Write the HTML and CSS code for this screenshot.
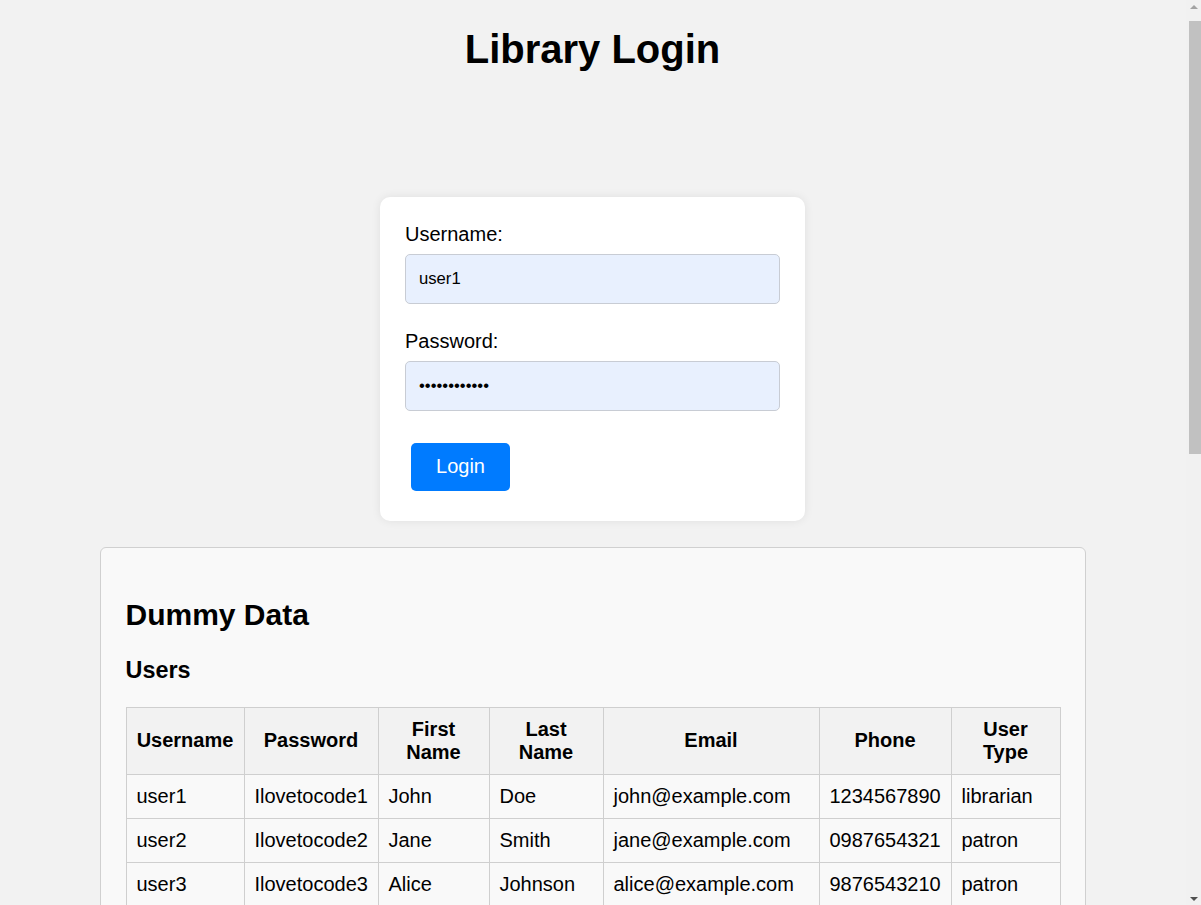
FILE: index.html
```html
<!DOCTYPE html>
<html lang="en">
<head>
<meta charset="utf-8">
<title>Library Login</title>
<link rel="stylesheet" href="styles.css">
</head>
<body>
<div class="page">
  <h1 class="title">Library Login</h1>

  <form class="login-card">
    <label class="field-label" for="username">Username:</label>
    <input class="field-input" id="username" type="text" value="user1">
    <label class="field-label" for="password">Password:</label>
    <input class="field-input" id="password" type="password" value="Ilovetocode1">
    <button class="login-btn" type="button">Login</button>
  </form>

  <section class="dummy">
    <h2 class="dummy-title">Dummy Data</h2>

    <h3 class="dummy-sub">Users</h3>
    <table class="data-table users">
      <colgroup>
        <col class="c-user"><col class="c-pass"><col class="c-first"><col class="c-last"><col class="c-email"><col class="c-phone"><col class="c-type">
      </colgroup>
      <thead>
        <tr><th>Username</th><th>Password</th><th>First Name</th><th>Last Name</th><th>Email</th><th>Phone</th><th>User Type</th></tr>
      </thead>
      <tbody>
        <tr><td>user1</td><td>Ilovetocode1</td><td>John</td><td>Doe</td><td>john@example.com</td><td>1234567890</td><td>librarian</td></tr>
        <tr><td>user2</td><td>Ilovetocode2</td><td>Jane</td><td>Smith</td><td>jane@example.com</td><td>0987654321</td><td>patron</td></tr>
        <tr><td>user3</td><td>Ilovetocode3</td><td>Alice</td><td>Johnson</td><td>alice@example.com</td><td>9876543210</td><td>patron</td></tr>
        <tr><td>user4</td><td>Ilovetocode4</td><td>Bob</td><td>Brown</td><td>bob@example.com</td><td>5551234567</td><td>patron</td></tr>
      </tbody>
    </table>

    <h3 class="dummy-sub">Books</h3>
    <table class="data-table">
      <thead>
        <tr><th>ID</th><th>Title</th><th>Author</th><th>Genre</th><th>Year</th><th>Available</th></tr>
      </thead>
      <tbody>
        <tr><td>1</td><td>To Kill a Mockingbird</td><td>Harper Lee</td><td>Fiction</td><td>1960</td><td>Yes</td></tr>
        <tr><td>2</td><td>1984</td><td>George Orwell</td><td>Dystopian</td><td>1949</td><td>Yes</td></tr>
        <tr><td>3</td><td>The Great Gatsby</td><td>F. Scott Fitzgerald</td><td>Fiction</td><td>1925</td><td>No</td></tr>
        <tr><td>4</td><td>Pride and Prejudice</td><td>Jane Austen</td><td>Romance</td><td>1813</td><td>Yes</td></tr>
        <tr><td>5</td><td>Moby-Dick</td><td>Herman Melville</td><td>Adventure</td><td>1851</td><td>Yes</td></tr>
        <tr><td>6</td><td>The Catcher in the Rye</td><td>J.D. Salinger</td><td>Fiction</td><td>1951</td><td>No</td></tr>
      </tbody>
    </table>

    <h3 class="dummy-sub">Loans</h3>
    <table class="data-table">
      <thead>
        <tr><th>Loan ID</th><th>Username</th><th>Book ID</th><th>Borrowed</th><th>Due</th><th>Returned</th></tr>
      </thead>
      <tbody>
        <tr><td>101</td><td>user2</td><td>3</td><td>2024-01-05</td><td>2024-01-19</td><td>No</td></tr>
        <tr><td>102</td><td>user3</td><td>6</td><td>2024-01-08</td><td>2024-01-22</td><td>No</td></tr>
        <tr><td>103</td><td>user4</td><td>5</td><td>2024-01-10</td><td>2024-01-24</td><td>Yes</td></tr>
      </tbody>
    </table>
  </section>
</div>

<div class="scrollbar" aria-hidden="true">
  <div class="sb-btn"><span class="sb-up"></span></div>
  <div class="sb-thumb"></div>
  <div class="sb-rest"></div>
  <div class="sb-btn"><span class="sb-down"></span></div>
</div>
</body>
</html>
```
FILE: styles.css
```css
html, body {
  scrollbar-width: none;
}

body {
  margin: 0;
  padding: 0;
  background: #f2f2f2;
  font-family: "Liberation Sans", Arial, sans-serif;
  font-size: 20px;
  color: #000;
}

.page {
  margin-right: 16px;
  padding-bottom: 40px;
}

.title {
  margin: 26px 0 125px;
  font-size: 40px;
  line-height: 46px;
  font-weight: bold;
  text-align: center;
}

.login-card {
  box-sizing: border-box;
  width: 425px;
  margin: 0 auto;
  padding: 26px 25px 24px;
  background: #fff;
  border-radius: 10px;
  box-shadow: 0 0 10px rgba(0, 0, 0, 0.08);
  display: flex;
  flex-direction: column;
  align-items: flex-start;
}

.field-label {
  display: block;
  font-size: 20px;
  line-height: 23px;
  margin-bottom: 8px;
}

.field-input {
  box-sizing: border-box;
  width: 100%;
  height: 50px;
  margin: 0 0 26px;
  padding: 0 13px;
  background: #e8f0fe;
  border: 1px solid #c8ccd4;
  border-radius: 5px;
  font-family: "Liberation Sans", Arial, sans-serif;
  font-size: 16.67px;
  color: #000;
  outline: none;
}

.login-btn {
  box-sizing: border-box;
  height: 48px;
  width: 99px;
  margin: 6px 0 6px 6px;
  padding: 0 0 2px;
  background: #007bff;
  color: #fff;
  border: none;
  border-radius: 5px;
  font-family: "Liberation Sans", Arial, sans-serif;
  font-size: 20px;
  cursor: pointer;
}

.dummy {
  box-sizing: border-box;
  width: 986px;
  margin: 26px auto 0;
  padding: 26px 25px 25px;
  background: #f9f9f9;
  border: 1px solid #d0d0d0;
  border-radius: 6px;
}

.dummy-title {
  margin: 24px 0 24px;
  font-size: 30px;
  line-height: 34.5px;
}

.dummy-sub {
  margin: 24px 0 23px;
  font-size: 23.4px;
  line-height: 27px;
}

.data-table {
  width: 100%;
  border-collapse: collapse;
  table-layout: fixed;
  margin-bottom: 20px;
}

.data-table th,
.data-table td {
  border: 1px solid #cfcfcf;
  padding: 10px 10px;
  line-height: 23px;
  font-size: 20px;
}

.data-table th {
  background: #f2f2f2;
  font-weight: bold;
  text-align: center;
}

.data-table td {
  text-align: left;
  white-space: nowrap;
}

.c-user { width: 118px; }
.c-pass { width: 134px; }
.c-first { width: 111px; }
.c-last { width: 114px; }
.c-email { width: 216px; }
.c-phone { width: 132px; }
.c-type { width: 109px; }

/* imitation of the browser's vertical scrollbar */
.scrollbar {
  position: fixed;
  top: 0;
  right: 0;
  width: 15px;
  height: 100vh;
  background: #f1f1f1;
  display: flex;
  flex-direction: column;
}

.sb-btn {
  height: 21px;
  flex: none;
  display: flex;
  align-items: center;
  justify-content: center;
}

.sb-up {
  width: 0;
  height: 0;
  border-left: 4px solid transparent;
  border-right: 4px solid transparent;
  border-bottom: 4px solid #a3a3a3;
  margin: -8px 0 0 1px;
}

.sb-down {
  width: 0;
  height: 0;
  border-left: 4px solid transparent;
  border-right: 4px solid transparent;
  border-top: 4px solid #505050;
  margin: 8px 0 0 1px;
}

.sb-thumb {
  flex: none;
  height: 433px;
  margin: 0 0 0 3px;
  background: #c1c1c1;
}

.sb-rest {
  flex: 1;
}
```
